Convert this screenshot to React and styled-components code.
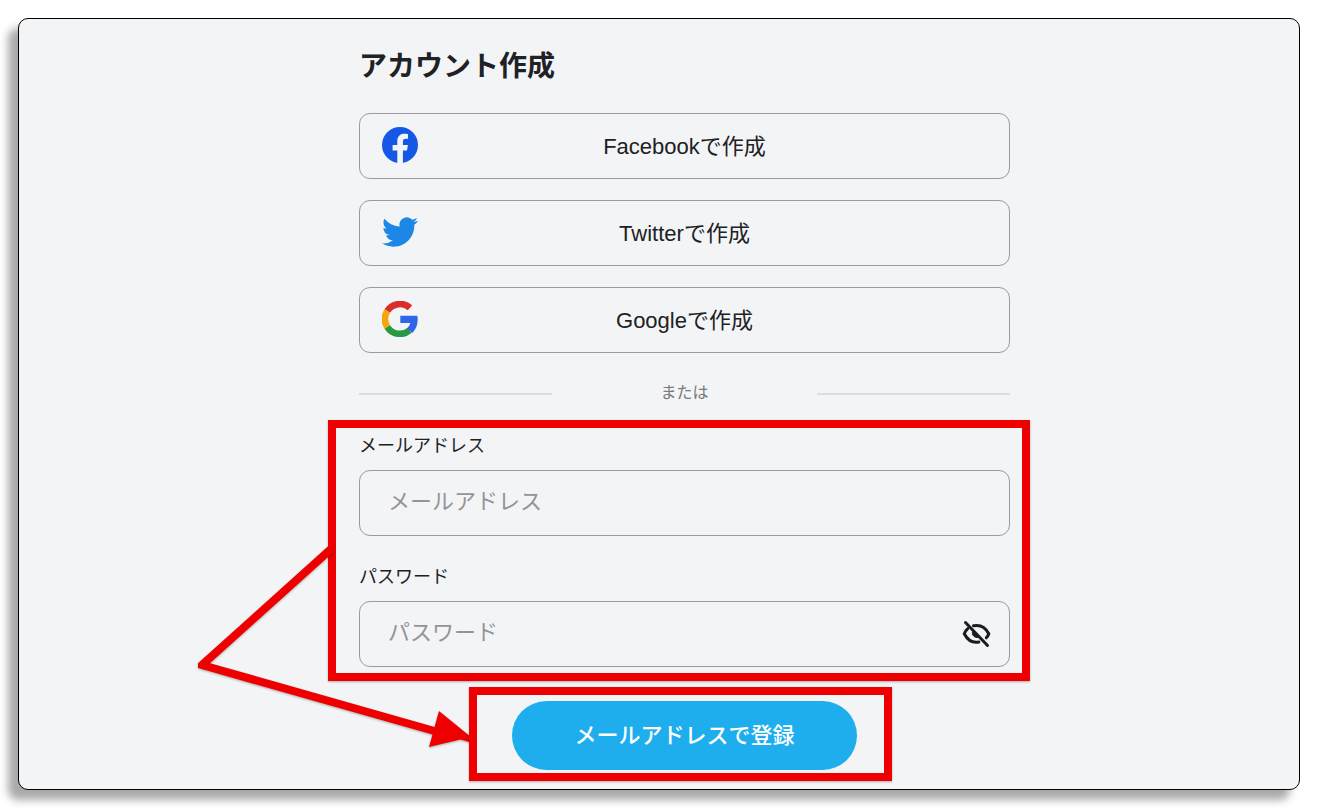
import React, { useState } from 'react';
import styled, { createGlobalStyle } from 'styled-components';

const FacebookIcon = () => (
  <svg width="36" height="36" viewBox="0 0 36 36" aria-hidden="true">
    <circle cx="18" cy="18" r="18" fill="#1558e6" />
    <path
      fill="#f3f4f6"
      d="M15.300 36V23.400H10.600v-5.400h4.700v-3.700c0-4.900 2.800-7.500 7.100-7.500 1.200 0 2.400.1 3.600.4v4.600h-2.100c-2.300 0-3 1.300-3 2.900v3.300h5l-.9 5.400h-4.100V36z"
    />
  </svg>
);

const TwitterIcon = () => (
  <svg width="36" height="36" viewBox="0 0 24 24" aria-hidden="true">
    <path
      fill="#1d87e8"
      d="M23.953 4.57a10 10 0 01-2.825.775 4.958 4.958 0 002.163-2.723c-.951.555-2.005.959-3.127 1.184a4.92 4.92 0 00-8.384 4.482C7.69 8.095 4.067 6.13 1.64 3.162a4.822 4.822 0 00-.666 2.475c0 1.71.87 3.213 2.188 4.096a4.904 4.904 0 01-2.228-.616v.06a4.923 4.923 0 003.946 4.827 4.996 4.996 0 01-2.212.085 4.936 4.936 0 004.604 3.417 9.867 9.867 0 01-6.102 2.105c-.39 0-.779-.023-1.17-.067a13.995 13.995 0 007.557 2.209c9.053 0 13.998-7.496 13.998-13.985 0-.21 0-.42-.015-.63A9.935 9.935 0 0024 4.59z"
    />
  </svg>
);

const GoogleIcon = () => (
  <svg width="36" height="36" viewBox="0 0 36 36" fill="none" aria-hidden="true">
    <path d="M5.3 10.1A15 15 0 0 1 28 6.8" stroke="#db2b2b" strokeWidth="6.6" />
    <path d="M5.3 25.9A14.9 14.9 0 0 1 5.3 10.1" stroke="#f5a60b" strokeWidth="6.6" />
    <path d="M27.4 29.5A14.9 14.9 0 0 1 5.3 25.9" stroke="#279a41" strokeWidth="6.6" />
    <path
      fill="#2f66e8"
      d="M18.3 14.7h17c.3 1.3.4 2.6.4 3.9 0 5.600-2 10.300-5.500 13.500l-5.700-4.500c1.900-1.300 3.200-3.200 3.700-5.600h-9.900z"
    />
  </svg>
);

const EyeOffIcon = () => (
  <svg
    width="30"
    height="28"
    viewBox="0 0 30 28"
    fill="none"
    stroke="#1b1c20"
    strokeWidth="3"
    strokeLinecap="round"
    aria-hidden="true"
  >
    <path d="M11.500 5.800C18 4.400 23.500 7.500 26.800 13.700C26.300 15.300 25.500 16.600 24.300 17.800" />
    <path d="M5.800 8.600C4.200 10 3 11.700 2.300 13.700C5.500 20 11 23 16.800 22" />
    <path d="M10.600 11.200C9.400 15 12.500 18.300 16.500 17.200L10.600 11.200Z" fill="#1b1c20" strokeWidth="1" />
    <path d="M3.500 2.500L25.500 25.500" />
  </svg>
);

const ArrowDrawing = () => (
  <svg width="290" height="220" viewBox="0 0 290 220" aria-hidden="true">
    <path
      d="M144 18L15 134L258 203"
      fill="none"
      stroke="#ee0000"
      strokeWidth="8"
      strokeLinejoin="bevel"
    />
    <path d="M11 132L17 129L19 139L11 137Z" fill="#ee0000" />
    <path d="M252 180L284 206L242 216Z" fill="#ee0000" />
    <path d="M262 202L283 208" stroke="#ee0000" strokeWidth="6" />
  </svg>
);

const providers = [
  { name: 'Facebook', Icon: FacebookIcon },
  { name: 'Twitter', Icon: TwitterIcon },
  { name: 'Google', Icon: GoogleIcon },
];

const App = () => {
  const [email, setEmail] = useState('');
  const [password, setPassword] = useState('');
  const [visible, setVisible] = useState(false);

  return (
    <>
      <GlobalStyle />
      <Card>
        <Form onSubmit={(e) => e.preventDefault()}>
          <Title>アカウント作成</Title>
          <ProviderList>
            {providers.map(({ name, Icon }) => (
              <ProviderButton type="button" key={name}>
                <Icon />
                <ProviderText>{name}で作成</ProviderText>
              </ProviderButton>
            ))}
          </ProviderList>
          <Divider>
            <DividerText>または</DividerText>
          </Divider>
          <Fields>
            <Field>
              <Label htmlFor="email">メールアドレス</Label>
              <InputBox>
                <Input
                  id="email"
                  type="email"
                  placeholder="メールアドレス"
                  value={email}
                  onChange={(e) => setEmail(e.target.value)}
                />
              </InputBox>
            </Field>
            <Field>
              <Label htmlFor="password">パスワード</Label>
              <InputBox>
                <Input
                  id="password"
                  type={visible ? 'text' : 'password'}
                  placeholder="パスワード"
                  value={password}
                  onChange={(e) => setPassword(e.target.value)}
                />
                <EyeButton
                  type="button"
                  aria-label="パスワードを表示"
                  onClick={() => setVisible(!visible)}
                >
                  <EyeOffIcon />
                </EyeButton>
              </InputBox>
            </Field>
            <Frame $inset="-12px -20px -14px -31px" />
            <Arrow>
              <ArrowDrawing />
            </Arrow>
          </Fields>
          <SubmitArea>
            <SubmitButton type="submit">メールアドレスで登録</SubmitButton>
            <Frame $inset="-14px -35px -11px -43px" />
          </SubmitArea>
        </Form>
      </Card>
    </>
  );
};

const GlobalStyle = createGlobalStyle`
  * {
    box-sizing: border-box;
  }
  body {
    margin: 0;
    background-color: #fff;
    color: #202124;
    font-family: 'Liberation Sans', 'Noto Sans CJK JP', sans-serif;
  }
  button,
  input {
    font-family: inherit;
    color: inherit;
  }
`;

const Card = styled.main`
  display: flex;
  justify-content: center;
  margin: 18px;
  min-height: calc(100vh - 36px);
  padding: 28px 0 19px 51px;
  border: 1px solid #000;
  border-radius: 10px;
  background-color: #f3f4f6;
  box-shadow: -10px 10px 8px rgba(0, 0, 0, 0.34);
`;

const Form = styled.form`
  width: 100%;
  max-width: 651px;
`;

const Title = styled.h1`
  margin: 0 0 26px;
  font-size: 28px;
  line-height: 40px;
  font-weight: bold;
`;

const ProviderList = styled.div`
  display: flex;
  flex-direction: column;
  gap: 21px;
`;

const ProviderButton = styled.button`
  display: grid;
  grid-template-columns: 36px 1fr 36px;
  align-items: center;
  height: 66px;
  padding: 0 22px 2px;
  border: 1px solid #9a9b9e;
  border-radius: 11px;
  background: none;
  font-size: 22px;
  line-height: 32px;
  cursor: pointer;
`;

const ProviderText = styled.span`
  padding-top: 4px;
  text-align: center;
`;

const Divider = styled.div`
  display: grid;
  grid-template-columns: 193px 1fr 193px;
  align-items: center;
  margin: 28px 0 25px;
  color: #77787b;
  font-size: 16px;
  line-height: 24px;
  text-align: center;

  &::before,
  &::after {
    content: '';
    height: 2px;
    background-color: #dcdddf;
  }
`;

const DividerText = styled.span`
  padding-bottom: 2px;
`;

const Fields = styled.div`
  position: relative;
  display: flex;
  flex-direction: column;
  gap: 27px;
`;

const Field = styled.div`
  display: flex;
  flex-direction: column;
  gap: 10px;
`;

const Label = styled.label`
  font-size: 18px;
  line-height: 28px;
`;

const InputBox = styled.div`
  display: flex;
  align-items: center;
  height: 66px;
  padding: 0 17px 0 28px;
  border: 1px solid #9a9b9e;
  border-radius: 11px;
`;

const Input = styled.input`
  flex: 1;
  min-width: 0;
  height: 60px;
  padding: 0 0 2px;
  border: none;
  outline: none;
  background: none;
  font-size: 22px;

  &::placeholder {
    color: #939497;
    opacity: 1;
  }
`;

const EyeButton = styled.button`
  display: flex;
  padding: 0;
  border: none;
  background: none;
  cursor: pointer;
`;

const SubmitArea = styled.div`
  position: relative;
  width: 345px;
  margin: 34px auto 0;
`;

const SubmitButton = styled.button`
  display: block;
  width: 100%;
  height: 69px;
  padding: 0 0 5px;
  border: none;
  border-radius: 35px;
  background-color: #1eaded;
  color: #fff;
  font-size: 22px;
  font-weight: 500;
  cursor: pointer;
`;

/* red marker box around a part of the form */
const Frame = styled.div`
  position: absolute;
  inset: ${(props) => props.$inset};
  border: 8px solid #ee0000;
  box-shadow: 0 1px 2px rgba(0, 0, 0, 0.3);
  pointer-events: none;
`;

const Arrow = styled.div`
  position: absolute;
  top: 99px;
  left: -172px;
  height: 220px;
  filter: drop-shadow(0 1px 1px rgba(0, 0, 0, 0.3));
  pointer-events: none;
`;

export default App;
